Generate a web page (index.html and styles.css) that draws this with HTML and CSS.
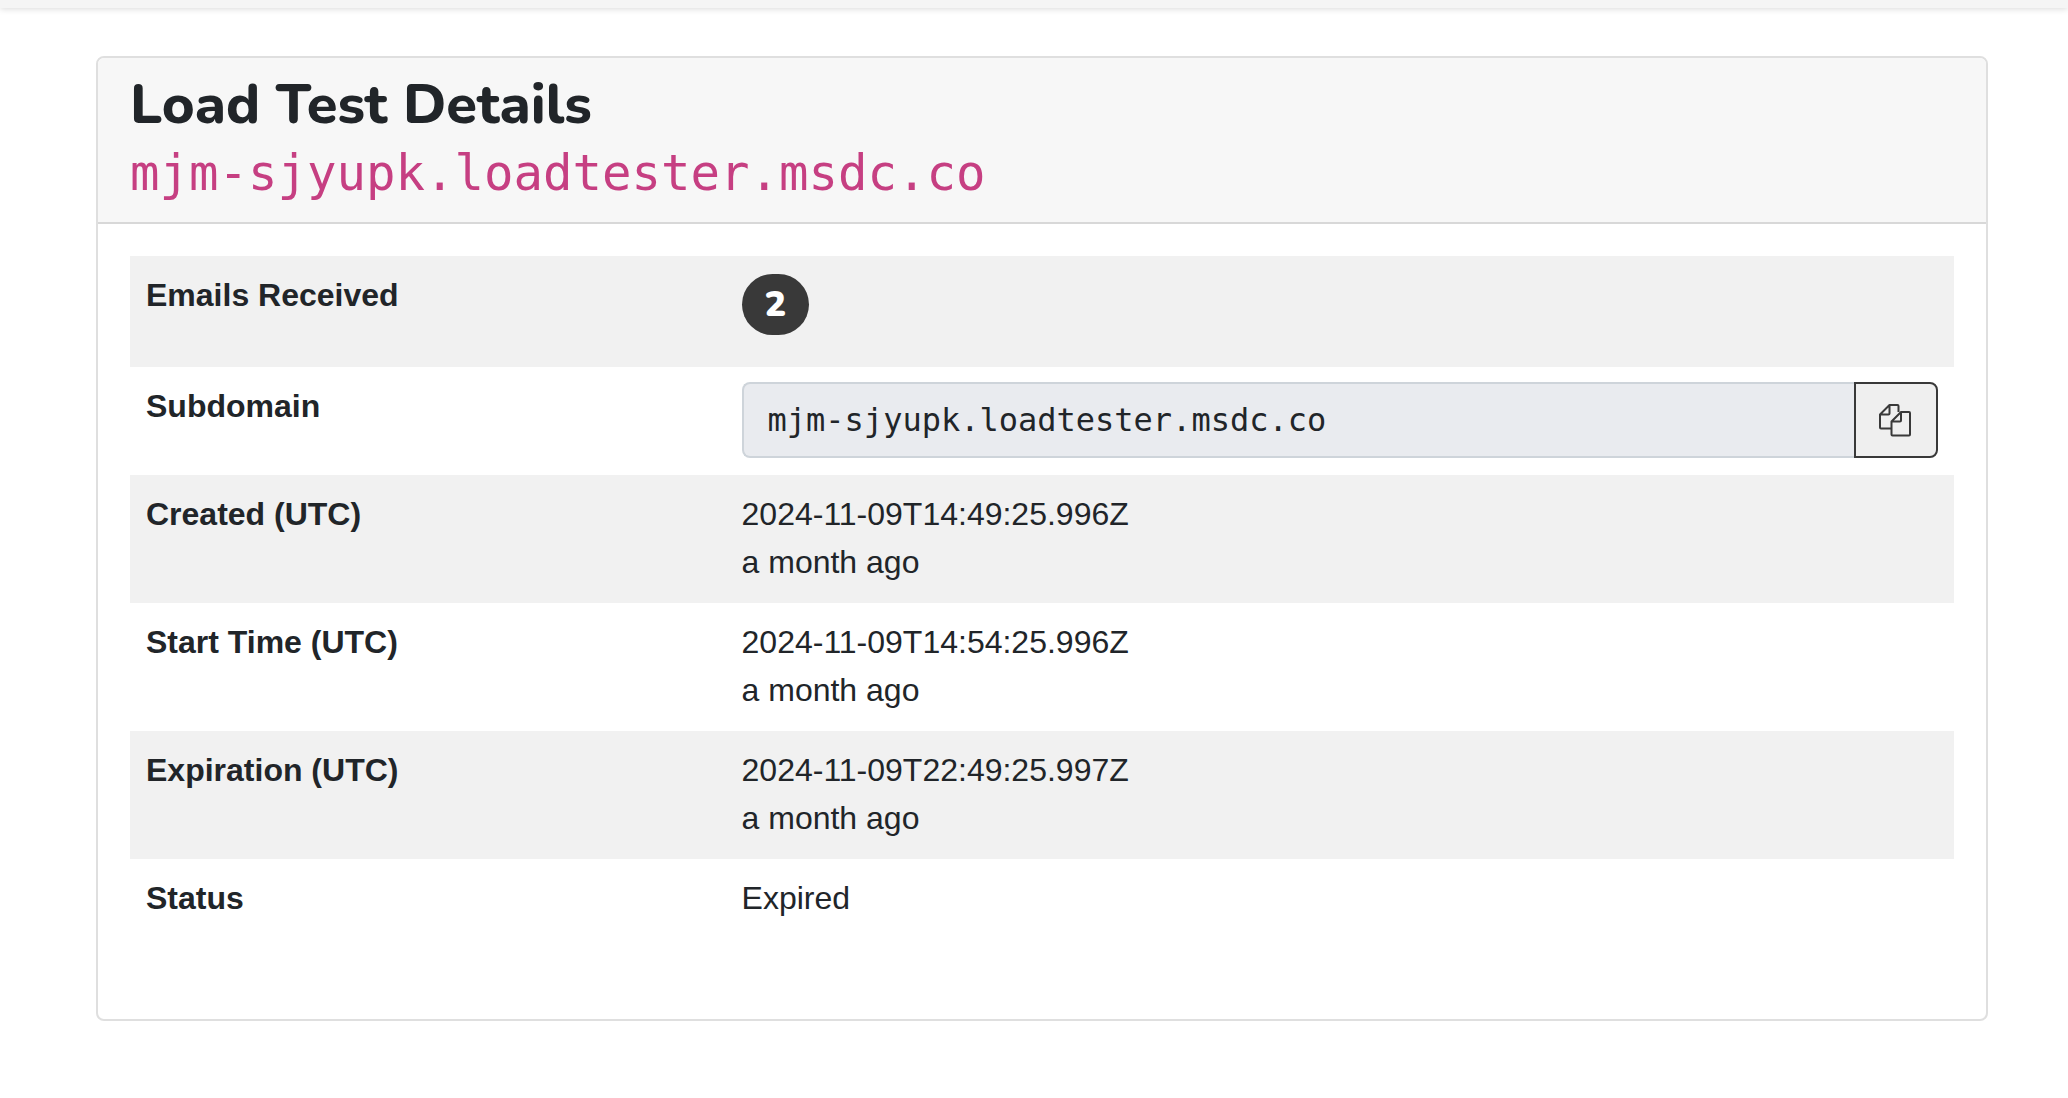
FILE: index.html
```html
<!DOCTYPE html>
<html lang="en">
<head>
<meta charset="utf-8">
<title>Load Test Details</title>
<link rel="stylesheet" href="styles.css">
</head>
<body>
<div class="navbar-edge"></div>
<main class="page">
  <section class="card">
    <header class="card-header">
      <h1 class="title">Load Test Details</h1>
      <code class="domain">mjm-sjyupk.loadtester.msdc.co</code>
    </header>
    <div class="card-body">
      <table class="details">
        <tbody>
          <tr>
            <th scope="row">Emails Received</th>
            <td class="count-cell"><span class="badge">2</span></td>
          </tr>
          <tr>
            <th scope="row"><label for="subdomain">Subdomain</label></th>
            <td>
              <div class="input-group">
                <input class="field" id="subdomain" type="text" value="mjm-sjyupk.loadtester.msdc.co" readonly>
                <button class="copy" type="button" aria-label="Copy">
                  <svg class="icon" viewBox="0 0 32 32" aria-hidden="true">
                    <path d="M19.500 8V2Q19.500 1 18.500 1H10.500L1 10.500V23.500Q1 24.500 2 24.500H12M10.500 1V9.500Q10.500 10.500 9.500 10.500H1"/>
                    <path d="M30 8H22L12.500 17.500V30.500Q12.500 31.500 13.500 31.500H30Q31 31.500 31 30.500V9Q31 8 30 8ZM22 8V16.500Q22 17.500 21 17.500H12.500"/>
                  </svg>
                </button>
              </div>
            </td>
          </tr>
          <tr>
            <th scope="row">Created (UTC)</th>
            <td>2024-11-09T14:49:25.996Z<br>a month ago</td>
          </tr>
          <tr>
            <th scope="row">Start Time (UTC)</th>
            <td>2024-11-09T14:54:25.996Z<br>a month ago</td>
          </tr>
          <tr>
            <th scope="row">Expiration (UTC)</th>
            <td>2024-11-09T22:49:25.997Z<br>a month ago</td>
          </tr>
          <tr>
            <th scope="row">Status</th>
            <td>Expired</td>
          </tr>
        </tbody>
      </table>
    </div>
  </section>
</main>
</body>
</html>
```
FILE: styles.css
```css
* {
  box-sizing: border-box;
}

body {
  margin: 0;
  background: #fff;
  color: #212529;
  font: 32px/48px "Liberation Sans", Arial, sans-serif;
}

.navbar-edge {
  height: 8px;
  background: #f5f5f5;
  box-shadow: 0 1px 6px rgba(0, 0, 0, 0.15);
}

.page {
  padding: 48px 80px 48px 96px;
}

.card {
  border: 2px solid #dfdfdf;
  border-radius: 8px;
  overflow: hidden;
}

.card-header {
  padding: 12px 32px 14px;
  background: #f7f7f7;
  border-bottom: 2px solid #d8d8d8;
}

.title {
  margin: 0;
  font: 800 56px/70px Nunito, "Open Sans", sans-serif;
}

.domain {
  display: block;
  color: #c63f82;
  font: 49px/68px "DejaVu Sans Mono", monospace;
}

.card-body {
  padding: 32px 32px 80px;
}

.details {
  width: 100%;
  border-collapse: collapse;
  table-layout: fixed;
}

.details th,
.details td {
  padding: 15px 16px 17px;
  text-align: left;
  vertical-align: top;
}

.details th {
  width: 32.65%;
  font-weight: 700;
}

.details tr:nth-child(odd) {
  background: #f1f1f1;
}

.details .count-cell {
  padding: 18px 16px 32px;
}

.badge {
  display: block;
  width: fit-content;
  padding: 0 23px;
  border-radius: 32px;
  background: #393939;
  color: #fff;
  font: 900 36px/61px Nunito, "Open Sans", sans-serif;
}

.input-group {
  display: flex;
  height: 76px;
}

.field {
  flex: 1;
  min-width: 0;
  padding: 0 24px;
  border: 2px solid #ced4da;
  border-right: 0;
  border-radius: 8px 0 0 8px;
  background: #e9ebef;
  color: #212529;
  font: 32px/48px "DejaVu Sans Mono", monospace;
}

.copy {
  display: flex;
  align-items: center;
  justify-content: center;
  width: 84px;
  padding: 0 2px 0 0;
  border: 2px solid #393939;
  border-radius: 0 8px 8px 0;
  background: #efefef;
  color: #393939;
}

.icon {
  width: 32px;
  height: 32px;
  overflow: visible;
  fill: none;
  stroke: currentColor;
  stroke-width: 2;
  stroke-linejoin: round;
}
```
